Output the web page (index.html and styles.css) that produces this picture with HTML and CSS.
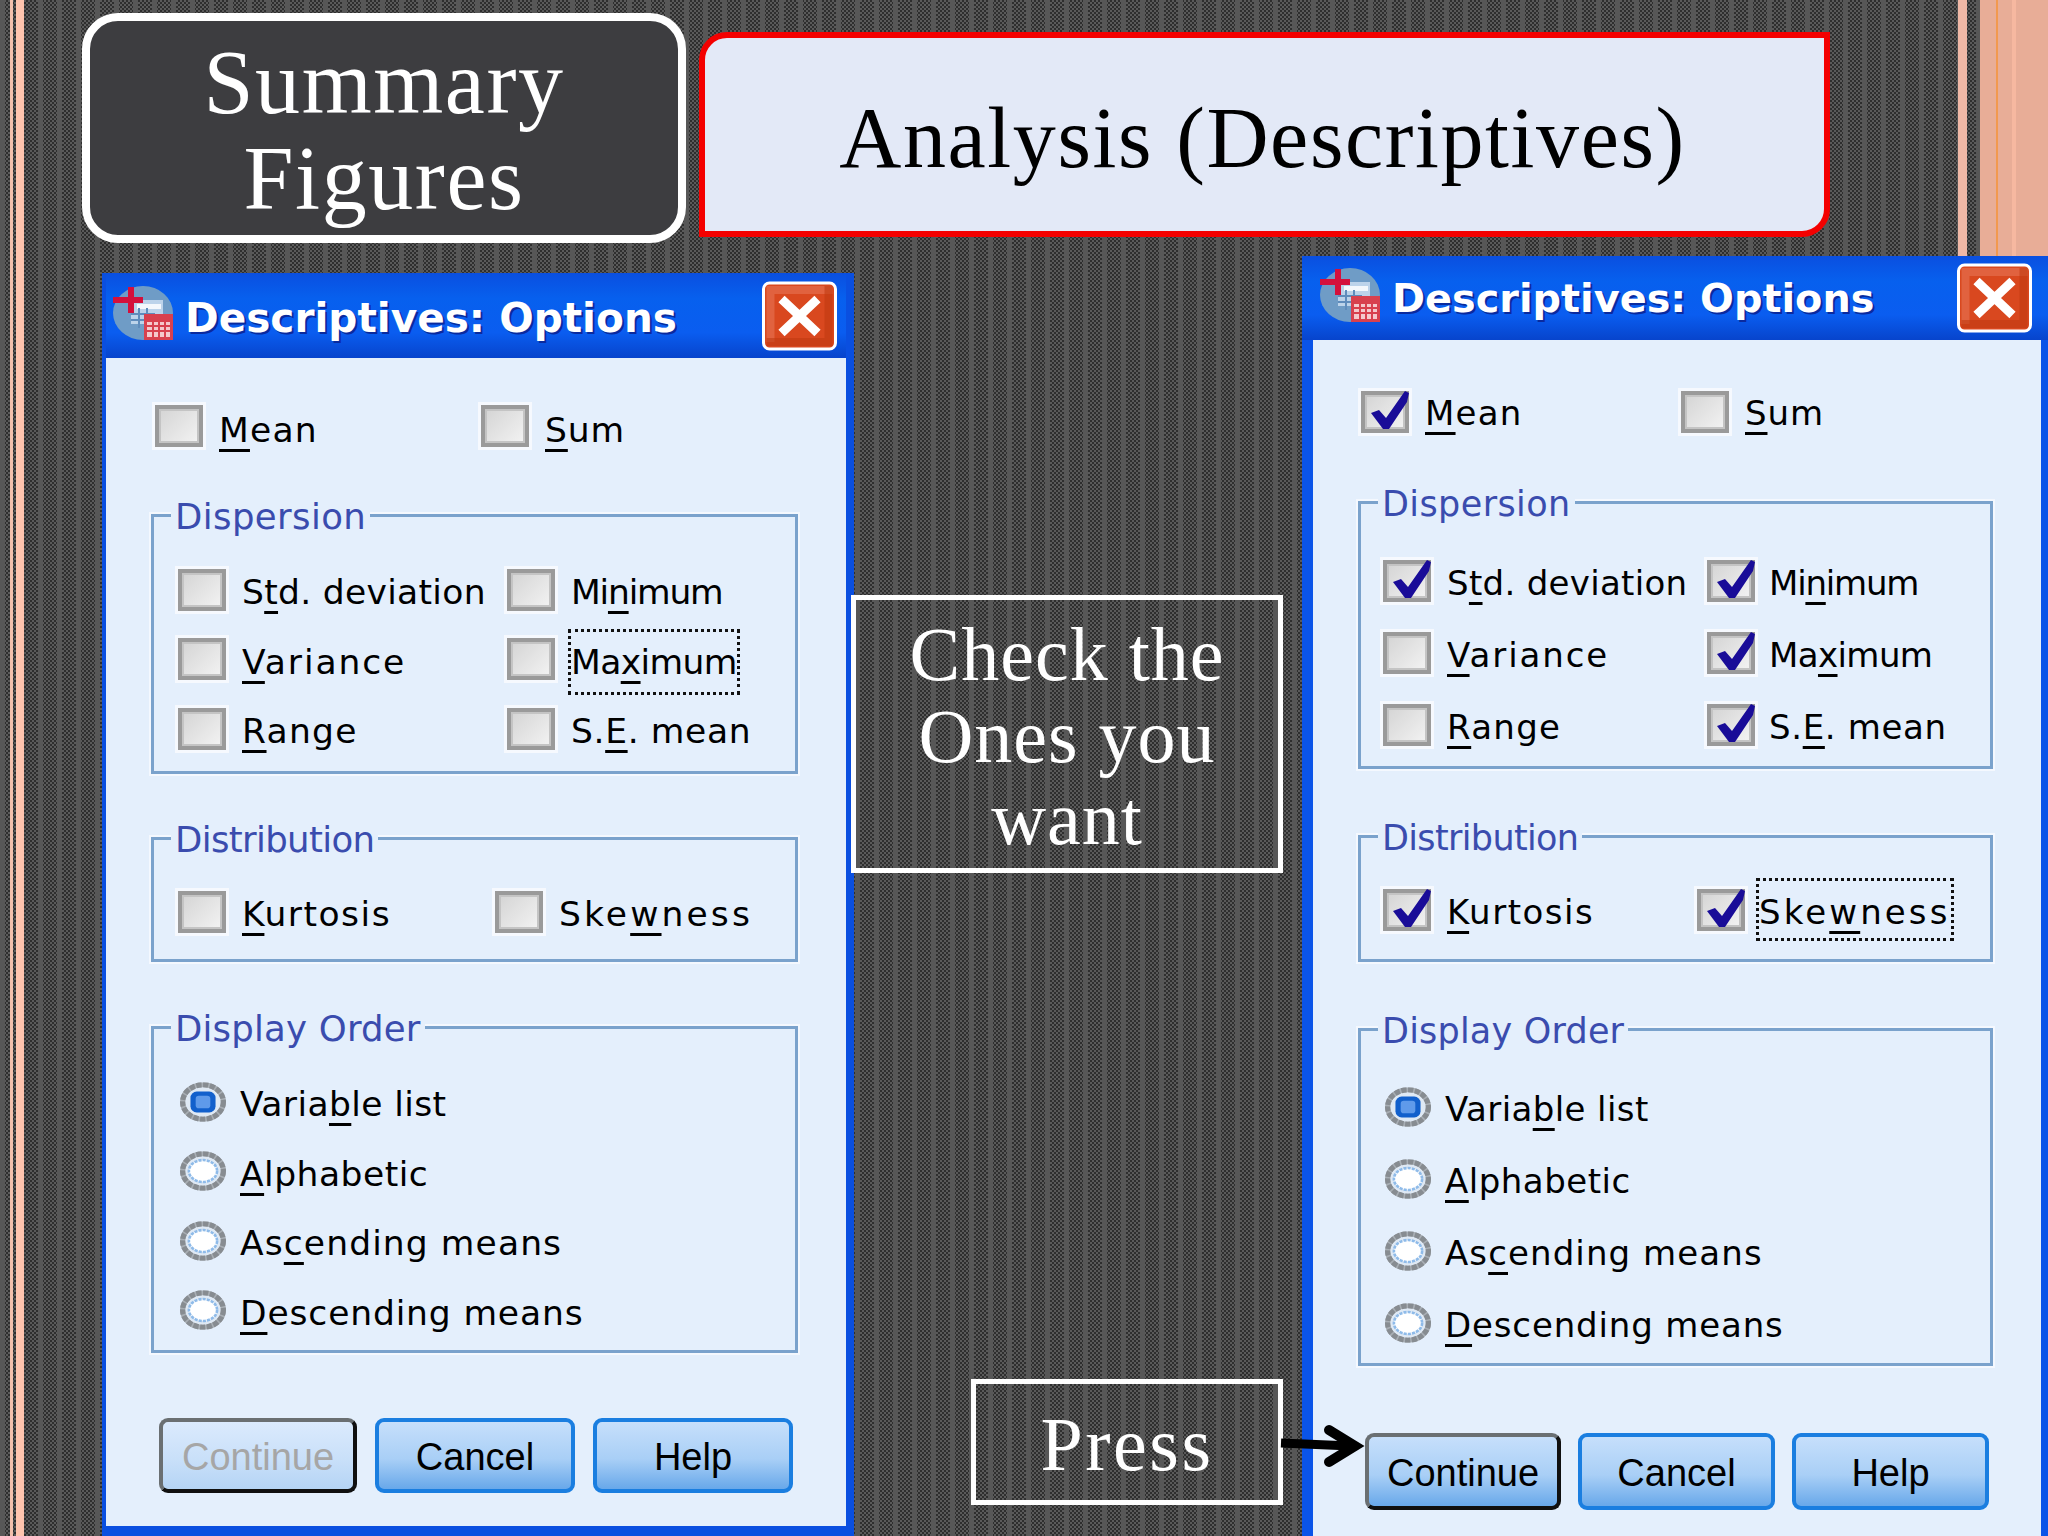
FILE: index.html
```html
<!DOCTYPE html>
<html lang="en">
<head>
<meta charset="utf-8">
<title>Summary Figures - Analysis (Descriptives)</title>
<link rel="stylesheet" href="styles.css">
</head>
<body>
<main class="slide">
  <h2 class="tag-summary">Summary<br>Figures</h2>
  <h1 class="tag-analysis">Analysis (Descriptives)</h1>

  <section class="dialog dialog-left">
    <header class="titlebar">
      <svg class="app-icon" viewBox="0 0 60 54" aria-hidden="true"><use href="#spss"/></svg>
      <span class="title-text">Descriptives: Options</span>
      <span class="close"><svg viewBox="0 0 76 70" aria-hidden="true"><use href="#closex"/></svg></span>
    </header>
    <div class="client">
      <div class="top-row">
        <label class="item"><span class="cb"></span><span class="t-mean"><u>M</u>ean</span></label>
        <label class="item"><span class="cb"></span><span class="t-sum"><u>S</u>um</span></label>
      </div>
      <div class="group g-disp">
        <span class="legend t-dispersion">Dispersion</span>
        <div class="rows">
          <label class="item"><span class="cb"></span><span class="t-std">S<u>t</u>d. deviation</span></label>
          <label class="item"><span class="cb"></span><span class="t-min">Mi<u>n</u>imum</span></label>
          <label class="item"><span class="cb"></span><span class="t-var"><u>V</u>ariance</span></label>
          <label class="item"><span class="cb"></span><span class="t-max focus">Ma<u>x</u>imum</span></label>
          <label class="item"><span class="cb"></span><span class="t-range"><u>R</u>ange</span></label>
          <label class="item"><span class="cb"></span><span class="t-se">S.<u>E</u>. mean</span></label>
        </div>
      </div>
      <div class="group g-dist">
        <span class="legend t-distribution">Distribution</span>
        <div class="rows">
          <label class="item"><span class="cb"></span><span class="t-kurt"><u>K</u>urtosis</span></label>
          <label class="item"><span class="cb"></span><span class="t-skew">Ske<u>w</u>ness</span></label>
        </div>
      </div>
      <div class="group g-order">
        <span class="legend t-order">Display Order</span>
        <div class="radios">
          <label class="item radio-item"><svg class="radio" viewBox="0 0 44 38" aria-hidden="true"><use href="#radio-on"/></svg><span class="t-varlist">Varia<u>b</u>le list</span></label>
          <label class="item radio-item"><svg class="radio" viewBox="0 0 44 38" aria-hidden="true"><use href="#radio-off"/></svg><span class="t-alpha"><u>A</u>lphabetic</span></label>
          <label class="item radio-item"><svg class="radio" viewBox="0 0 44 38" aria-hidden="true"><use href="#radio-off"/></svg><span class="t-asc">As<u>c</u>ending means</span></label>
          <label class="item radio-item"><svg class="radio" viewBox="0 0 44 38" aria-hidden="true"><use href="#radio-off"/></svg><span class="t-desc"><u>D</u>escending means</span></label>
        </div>
      </div>
      <div class="buttons">
        <span class="btn btn-disabled">Continue</span>
        <span class="btn">Cancel</span>
        <span class="btn">Help</span>
      </div>
    </div>
  </section>

  <section class="dialog dialog-right">
    <header class="titlebar">
      <svg class="app-icon" viewBox="0 0 60 54" aria-hidden="true"><use href="#spss"/></svg>
      <span class="title-text">Descriptives: Options</span>
      <span class="close"><svg viewBox="0 0 76 70" aria-hidden="true"><use href="#closex"/></svg></span>
    </header>
    <div class="client">
      <div class="top-row">
        <label class="item"><span class="cb"><svg class="tick" viewBox="0 0 48 42" aria-hidden="true"><use href="#tick"/></svg></span><span class="t-mean"><u>M</u>ean</span></label>
        <label class="item"><span class="cb"></span><span class="t-sum"><u>S</u>um</span></label>
      </div>
      <div class="group g-disp">
        <span class="legend t-dispersion">Dispersion</span>
        <div class="rows">
          <label class="item"><span class="cb"><svg class="tick" viewBox="0 0 48 42" aria-hidden="true"><use href="#tick"/></svg></span><span class="t-std">S<u>t</u>d. deviation</span></label>
          <label class="item"><span class="cb"><svg class="tick" viewBox="0 0 48 42" aria-hidden="true"><use href="#tick"/></svg></span><span class="t-min">Mi<u>n</u>imum</span></label>
          <label class="item"><span class="cb"></span><span class="t-var"><u>V</u>ariance</span></label>
          <label class="item"><span class="cb"><svg class="tick" viewBox="0 0 48 42" aria-hidden="true"><use href="#tick"/></svg></span><span class="t-max">Ma<u>x</u>imum</span></label>
          <label class="item"><span class="cb"></span><span class="t-range"><u>R</u>ange</span></label>
          <label class="item"><span class="cb"><svg class="tick" viewBox="0 0 48 42" aria-hidden="true"><use href="#tick"/></svg></span><span class="t-se">S.<u>E</u>. mean</span></label>
        </div>
      </div>
      <div class="group g-dist">
        <span class="legend t-distribution">Distribution</span>
        <div class="rows">
          <label class="item"><span class="cb"><svg class="tick" viewBox="0 0 48 42" aria-hidden="true"><use href="#tick"/></svg></span><span class="t-kurt"><u>K</u>urtosis</span></label>
          <label class="item"><span class="cb"><svg class="tick" viewBox="0 0 48 42" aria-hidden="true"><use href="#tick"/></svg></span><span class="t-skew focus">Ske<u>w</u>ness</span></label>
        </div>
      </div>
      <div class="group g-order">
        <span class="legend t-order">Display Order</span>
        <div class="radios">
          <label class="item radio-item"><svg class="radio" viewBox="0 0 44 38" aria-hidden="true"><use href="#radio-on"/></svg><span class="t-varlist">Varia<u>b</u>le list</span></label>
          <label class="item radio-item"><svg class="radio" viewBox="0 0 44 38" aria-hidden="true"><use href="#radio-off"/></svg><span class="t-alpha"><u>A</u>lphabetic</span></label>
          <label class="item radio-item"><svg class="radio" viewBox="0 0 44 38" aria-hidden="true"><use href="#radio-off"/></svg><span class="t-asc">As<u>c</u>ending means</span></label>
          <label class="item radio-item"><svg class="radio" viewBox="0 0 44 38" aria-hidden="true"><use href="#radio-off"/></svg><span class="t-desc"><u>D</u>escending means</span></label>
        </div>
      </div>
      <div class="buttons">
        <span class="btn btn-default">Continue</span>
        <span class="btn">Cancel</span>
        <span class="btn">Help</span>
      </div>
    </div>
  </section>

  <p class="callout callout-check">Check the<br>Ones you<br>want</p>
  <p class="callout callout-press">Press</p>
  <svg class="arrow" viewBox="0 0 90 44" aria-hidden="true">
    <path d="M2 19 L72 22" fill="none" stroke="#000" stroke-width="9"/>
    <path d="M50 6 L76 22 L50 38" fill="none" stroke="#000" stroke-width="10" stroke-linecap="round" stroke-linejoin="miter"/>
  </svg>
</main>

<svg class="defs" aria-hidden="true">
  <defs>
    <symbol id="spss" viewBox="0 0 60 54">
      <ellipse cx="30" cy="27" rx="30" ry="27" fill="#6f9cc6"/>
      <path d="M18 14 H50 V38 H18 Z" fill="#bcd3ea"/>
      <path d="M24 18 H48 V23 H24 Z" fill="#f4f8fc"/>
      <path d="M18 28 H42 M18 34 H42 M26 22 V42 M34 22 V42" stroke="#5f8cbc" stroke-width="2" fill="none"/>
      <path d="M15 1 H21 V11 H30 V17 H21 V27 H15 V17 H0 V11 H15 Z" fill="#d4103c"/>
      <path d="M31 28 H60 V54 H31 Z" fill="#d8404e"/>
      <path d="M34 36 H57 V51 H34 Z" fill="#f4c8cc"/>
      <path d="M34 40 H57 M34 45 H57 M40 36 V51 M46 36 V51 M52 36 V51" stroke="#d8404e" stroke-width="2" fill="none"/>
    </symbol>
    <symbol id="closex" viewBox="0 0 76 70">
      <rect x="2" y="2" width="72" height="66" rx="6" fill="#d9481f" stroke="#fff" stroke-width="3"/>
      <path d="M5 5 H71 V13 H13 V61 H5 Z" fill="#e8785a" opacity=".55"/>
      <path d="M5 65 H71 V5 H63 V57 H5 Z" fill="#bf3a10" opacity=".6"/>
      <path d="M20 18 L56 52 M56 18 L20 52" stroke="#fff" stroke-width="9" fill="none"/>
    </symbol>
    <symbol id="tick" viewBox="0 0 48 42">
      <path d="M8 22 L16 19 L23 27 L42 0 L46 2 L44 11 L26 38 L20 38 Z" fill="#190c98"/>
    </symbol>
    <symbol id="radio-off" viewBox="0 0 44 38">
      <ellipse cx="22" cy="19" rx="19.5" ry="16.5" fill="#dfe9f4" stroke="#a8aeb4" stroke-width="5"/>
      <ellipse cx="22" cy="19" rx="19.5" ry="16.5" fill="none" stroke="#878c91" stroke-width="5" stroke-dasharray="5 1.5"/>
      <ellipse cx="22" cy="19" rx="13.5" ry="10.5" fill="#fff" stroke="#8fbbe9" stroke-width="2.5" stroke-dasharray="3 1"/>
    </symbol>
    <symbol id="radio-on" viewBox="0 0 44 38">
      <ellipse cx="22" cy="19" rx="19.5" ry="16.5" fill="#dfe9f4" stroke="#a8aeb4" stroke-width="5"/>
      <ellipse cx="22" cy="19" rx="19.5" ry="16.5" fill="none" stroke="#878c91" stroke-width="5" stroke-dasharray="5 1.5"/>
      <rect x="10" y="9" width="24" height="20" rx="6" fill="#1260cc"/>
      <rect x="15" y="13" width="14" height="12" rx="3" fill="#5f9aea"/>
    </symbol>
  </defs>
</svg>
</body>
</html>
```

FILE: styles.css
```css
html, body {
  margin: 0;
  padding: 0;
}

.defs {
  position: absolute;
  width: 0;
  height: 0;
}

.slide {
  position: relative;
  width: 2048px;
  height: 1536px;
  overflow: hidden;
  background-color: #444;
  background-image:
    linear-gradient(90deg, transparent 0 1958px, #f0b8a6 1958px 1967px, transparent 1967px 1980px, #e8ad97 1980px 1996px, #f2994f 1996px 1998px, #e8ad97 1998px 2012px, #f6b8a0 2012px 2016px, #e8ad97 2016px 2048px),
    linear-gradient(90deg, transparent 0 10px, #f3c0ac 10px 13px, transparent 13px 16px, #ffc4ae 16px 24px, transparent 24px),
    repeating-linear-gradient(90deg, #575757 0 5px, transparent 5px 19px),
    repeating-conic-gradient(#2e2e2e 0 25%, #5a5a5a 0 50%);
  background-size: auto, auto, auto, 4px 4px;
  font-family: "DejaVu Sans", sans-serif;
}

/* Slide headings */
.tag-summary,
.tag-analysis,
.callout {
  position: absolute;
  margin: 0;
  box-sizing: border-box;
  display: flex;
  align-items: center;
  justify-content: center;
  text-align: center;
  font-family: "Liberation Serif", serif;
  font-weight: 400;
}

.tag-summary {
  left: 82px;
  top: 13px;
  width: 604px;
  height: 230px;
  padding-top: 6px;
  border: 8px solid #fff;
  border-radius: 36px;
  background: #3d3d40;
  color: #fff;
  font-size: 90px;
  letter-spacing: 1.6px;
  line-height: 96px;
}

.tag-analysis {
  left: 699px;
  top: 32px;
  width: 1131px;
  height: 205px;
  padding: 6px 4px 0 0;
  border: 6px solid #f40000;
  border-radius: 28px 0 28px 0;
  background: #e3e9f7;
  color: #000;
  font-size: 86px;
  letter-spacing: 1.6px;
  line-height: 100px;
}

.callout {
  border: 5px solid #fff;
  color: #fff;
  font-size: 76px;
  line-height: 82px;
}

.callout-check {
  left: 851px;
  top: 595px;
  width: 432px;
  height: 278px;
  padding-top: 3px;
  letter-spacing: 1px;
}

.callout-press {
  left: 971px;
  top: 1379px;
  width: 312px;
  height: 126px;
  padding-top: 4px;
  letter-spacing: 2.5px;
}

.arrow {
  position: absolute;
  left: 1279px;
  top: 1424px;
  width: 90px;
  height: 44px;
  overflow: visible;
}

/* Dialog windows */
.dialog {
  position: absolute;
  box-sizing: border-box;
  display: flex;
  flex-direction: column;
  background: #0a4fe0;
  color: #000;
}

.dialog-left {
  --label-shift: 5px;
  left: 102px;
  top: 273px;
  width: 752px;
  height: 1263px;
  border-style: solid;
  border-color: #0a4fe0;
  border-width: 0 8px 10px 4px;
  font-size: 34.5px;
}

.dialog-right {
  --label-shift: 3px;
  left: 1302px;
  top: 256px;
  width: 746px;
  height: 1280px;
  border-style: solid;
  border-color: #0a54e8;
  border-width: 0 7px 0 11px;
  font-size: 34px;
}

.titlebar {
  box-sizing: border-box;
  flex: none;
  display: flex;
  align-items: center;
  padding: 0 8px 0 7px;
  background: linear-gradient(180deg, #0a4fe0 0%, #0760ee 30%, #0a5df0 70%, #0744cc 100%);
}

.dialog-left .titlebar { height: 85px; }
.dialog-right .titlebar { height: 84px; margin-left: -11px; padding-left: 18px; margin-right: -7px; padding-right: 15px; }

.app-icon {
  flex: none;
  width: 60px;
  height: 54px;
  margin-right: 12px;
  margin-bottom: 6px;
}

.title-text {
  flex: 1;
  color: #fff;
  font-weight: 700;
  white-space: nowrap;
  text-shadow: 2px 2px 0 #0a2a9e;
}

.dialog-left .title-text { font-size: 40.6px; padding-top: 4px; }
.dialog-right .title-text { font-size: 39.8px; }

.close {
  flex: none;
  display: block;
  width: 77px;
  height: 70px;
}

.close svg {
  display: block;
  width: 100%;
  height: 100%;
}

.client {
  flex: 1;
  box-sizing: border-box;
  background: #e4effc;
  padding-left: 45px;
}

.dialog-left .client { padding-top: 47px; }
.dialog-right .client { padding-top: 50px; }

.item {
  display: flex;
  align-items: center;
  white-space: nowrap;
}

.item > span:last-child {
  padding-top: var(--label-shift);
}

/* Per-word tracking: the reference text is a scaled-up hinted bitmap font */
.t-mean { letter-spacing: 1.2px; }
.t-sum { letter-spacing: .9px; }
.t-std { letter-spacing: .3px; }
.t-min { letter-spacing: -1.2px; }
.t-var { letter-spacing: 1.9px; }
.t-max { letter-spacing: -.6px; }
.t-range { letter-spacing: 1.3px; }
.t-se { letter-spacing: .65px; }
.t-kurt { letter-spacing: 1.5px; }
.t-skew { letter-spacing: 3.1px; }
.t-varlist { letter-spacing: .4px; }
.t-alpha { letter-spacing: .5px; }
.t-asc { letter-spacing: 1.1px; }
.t-desc { letter-spacing: .85px; }
.t-dispersion { letter-spacing: .4px; }
.t-distribution { letter-spacing: -.65px; }
.t-order { letter-spacing: .2px; }

u {
  text-decoration-thickness: 3px;
  text-underline-offset: 7px;
  text-decoration-skip-ink: none;
}

.cb {
  position: relative;
  flex: none;
  box-sizing: border-box;
  width: 48px;
  height: 42px;
  margin-right: 16px;
  border: 4px solid #9a9a9a;
  background: linear-gradient(135deg, #d4d4d4, #f3f3f3);
  box-shadow: 0 0 0 3px #f6f9fe, inset 0 0 0 2px #c4c4c4;
}

.dialog-right .rows .item:nth-child(even) .cb {
  margin-right: 14px;
}

.dialog-left .top-row .cb {
  margin-top: -3px;
}

.tick {
  position: absolute;
  left: -2px;
  top: -4px;
  width: 48px;
  height: 42px;
  overflow: visible;
}

.radio {
  flex: none;
  width: 46px;
  height: 40px;
  margin-right: 14px;
}

.top-row {
  display: grid;
  align-items: center;
  height: 42px;
}

.dialog-left .top-row {
  grid-template-columns: 326px auto;
  padding-left: 4px;
}

.dialog-right .top-row {
  grid-template-columns: 320px auto;
  padding-left: 3px;
}

.group {
  position: relative;
  box-sizing: border-box;
  border: 3px solid #7aa2cc;
  box-shadow: 0 0 0 2px #f4f8fe;
}

.dialog-left .group { width: 647px; }
.dialog-right .group { width: 635px; }

.legend {
  position: absolute;
  top: -20px;
  padding: 0 4px;
  line-height: 40px;
  background: #e4effc;
  color: #3a4cae;
}

.dialog-left .legend { left: 17px; font-size: 35.5px; }
.dialog-right .legend { left: 17px; font-size: 35px; }

.rows,
.radios {
  display: grid;
}

.dialog-left .rows,
.dialog-left .radios { grid-auto-rows: 69.5px; padding-left: 24px; }

.dialog-right .rows,
.dialog-right .radios { grid-auto-rows: 72px; padding-left: 22px; }

.radios {
  grid-template-columns: auto;
}

.radio-item {
  padding-left: 2px;
}

.dialog-left .g-disp .rows { grid-template-columns: 329px auto; }
.dialog-left .g-dist .rows { grid-template-columns: 317px auto; }
.dialog-right .g-disp .rows { grid-template-columns: 324px auto; }
.dialog-right .g-dist .rows { grid-template-columns: 314px auto; }

.dialog-left .g-disp  { height: 260px; margin-top: 67px; padding-top: 38px; }
.dialog-left .g-dist  { height: 125px; margin-top: 63px; padding-top: 37px; }
.dialog-left .g-order { height: 327px; margin-top: 64px; padding-top: 38px; }

.dialog-right .g-disp  { height: 268px; margin-top: 69px; padding-top: 41px; }
.dialog-right .g-dist  { height: 127px; margin-top: 66px; padding-top: 36px; }
.dialog-right .g-order { height: 338px; margin-top: 66px; padding-top: 40px; }

.focus {
  position: relative;
}

.focus::after {
  content: "";
  position: absolute;
  border: 3px dotted #111;
}

.dialog-left .focus::after { inset: -8px -3px -13px -3px; }
.dialog-right .focus::after { inset: -11px -3px -9px -3px; }

.buttons {
  display: flex;
  font-family: "Liberation Sans", sans-serif;
  font-size: 38px;
}

.dialog-left .buttons {
  gap: 18px;
  margin-top: 65px;
  padding-left: 8px;
}

.dialog-right .buttons {
  gap: 17px;
  margin-top: 67px;
  padding-left: 7px;
}

.btn {
  box-sizing: border-box;
  display: flex;
  align-items: center;
  justify-content: center;
  padding-top: 3px;
  border: 4px solid #1a7ee0;
  border-radius: 9px;
  background: linear-gradient(180deg, #c6dffb 0%, #a9cff6 55%, #68a8ea 100%);
}

.dialog-left .btn { width: 200px; height: 75px; }
.dialog-right .btn { width: 197px; height: 77px; }
.dialog-left .btn-disabled { width: 198px; }
.dialog-right .btn-default { width: 196px; }

.btn-disabled {
  border-color: #6a6f72 #101010 #101010 #6a6f72;
  background: linear-gradient(180deg, #dbeafd 0%, #c9e0f9 55%, #b5d4f5 100%);
  color: #a6a6a6;
}

.btn-default {
  border-color: #6a6f72 #101010 #101010 #6a6f72;
}
```
